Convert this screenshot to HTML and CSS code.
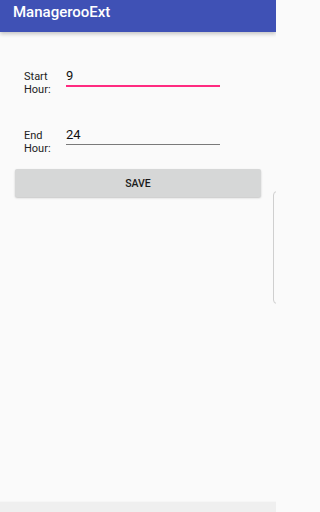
FILE: index.html
```html
<!DOCTYPE html>
<html>
<head>
<meta charset="utf-8">
<title>ManagerooExt</title>
<link rel="stylesheet" href="styles.css">
</head>
<body>
<div class="app">
  <header class="toolbar">
    <h1 class="title">ManagerooExt</h1>
  </header>
  <main class="content">
    <div class="form">
      <div class="row">
        <label class="label" for="start">Start<br>Hour:</label>
        <input class="field field-active" id="start" type="text" value="9">
      </div>
      <div class="row">
        <label class="label" for="end">End<br>Hour:</label>
        <input class="field" id="end" type="text" value="24">
      </div>
    </div>
    <button class="save" type="button">SAVE</button>
  </main>
  <div class="navbar"></div>
  <div class="edge-handle"></div>
</div>
</body>
</html>
```

FILE: styles.css
```css
html, body {
  margin: 0;
  padding: 0;
  background: #fafafa;
}

body {
  font-family: Roboto, "Noto Sans", sans-serif;
  color: #212121;
}

.app {
  position: relative;
  width: 276px;
  height: 512px;
  display: flex;
  flex-direction: column;
  overflow: hidden;
}

.toolbar {
  height: 32px;
  box-sizing: border-box;
  padding: 4px 13px 0;
  background: #3f51b5;
  box-shadow: 0 2px 4px rgba(0, 0, 0, 0.22);
  position: relative;
  z-index: 1;
}

.title {
  margin: 0;
  font-size: 15px;
  line-height: 16px;
  font-weight: 500;
  color: #ffffff;
}

.content {
  flex: 1;
  display: flex;
  flex-direction: column;
  padding-top: 36px;
}

.form {
  display: flex;
  flex-direction: column;
  gap: 30.4px;
  padding-left: 24px;
}

.row {
  display: flex;
  align-items: baseline;
}

.label {
  width: 42px;
  font-size: 11px;
  line-height: 12.7px;
  color: #222;
}

.field {
  width: 154px;
  height: 15px;
  box-sizing: content-box;
  margin: 0;
  padding: 0 0 2px 0;
  border: none;
  border-bottom: 1px solid #7a7a7a;
  background: transparent;
  font-family: Roboto, "Noto Sans", sans-serif;
  font-size: 13px;
  line-height: 15px;
  color: #111;
  outline: none;
}

.field-active {
  border-bottom: 2px solid #ff2a80;
}

.save {
  margin: 14px 0 0 15px;
  width: 246px;
  height: 28px;
  border: none;
  border-radius: 2px;
  background: #d6d7d7;
  box-shadow: 0 1px 2px rgba(0, 0, 0, 0.22);
  font-family: Roboto, "Noto Sans", sans-serif;
  font-size: 10.5px;
  font-weight: 500;
  color: #1a1a1a;
  padding: 0;
}

.navbar {
  height: 10px;
  background: #efefef;
  border-top: 1px solid #f6f6f6;
}

.edge-handle {
  position: absolute;
  left: 273px;
  top: 191px;
  width: 10px;
  height: 113px;
  box-sizing: border-box;
  border: 1px solid #cfcfcf;
  border-radius: 4px;
  background: #fafafa;
}
```
